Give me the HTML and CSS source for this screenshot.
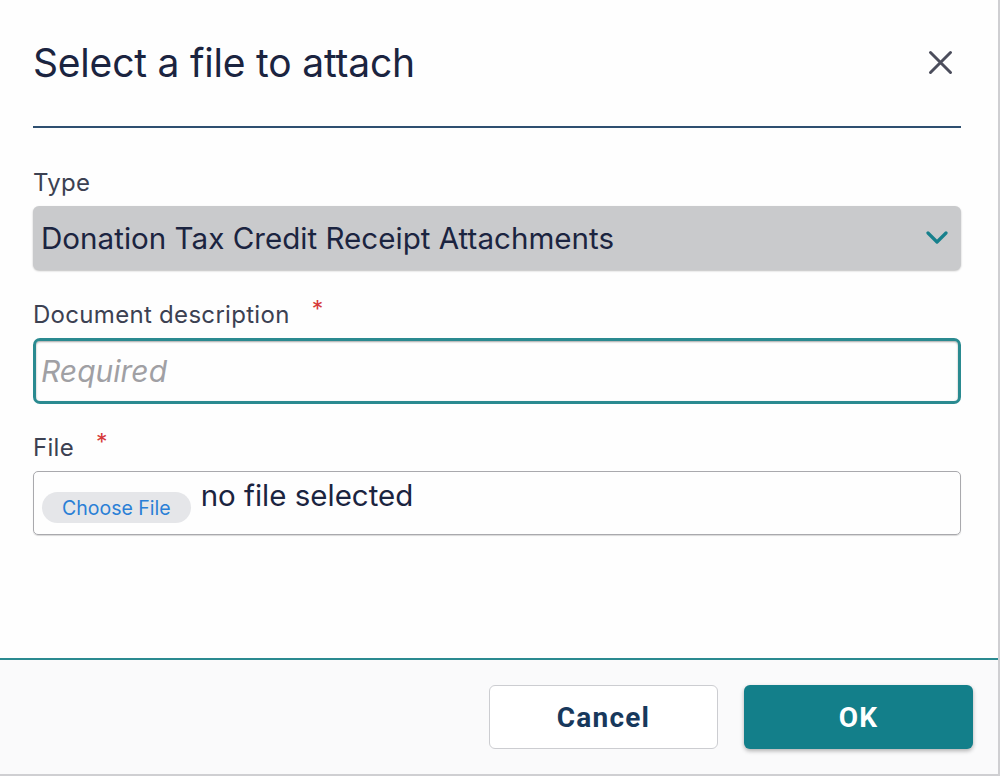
FILE: index.html
```html
<!DOCTYPE html>
<html>
<head>
<meta charset="utf-8">
<link rel="stylesheet" href="styles.css">
</head>
<body>
<div class="dialog">
  <div class="header">
    <h1 class="title">Select a file to attach</h1>
    <button class="close" aria-label="Close">
      <svg width="25" height="25" viewBox="0 0 25 25"><path d="M2.5 2.5L22.5 22.5M22.5 2.5L2.5 22.5" stroke="#4b4d5c" stroke-width="3" stroke-linecap="round"/></svg>
    </button>
  </div>
  <div class="body">
    <div class="field">
      <label class="label">Type</label>
      <div class="select">
        <span>Donation Tax Credit Receipt Attachments</span>
        <svg width="22" height="14" viewBox="0 0 22 14"><path d="M2 2L11 11L20 2" stroke="#17808c" stroke-width="3.2" fill="none" stroke-linecap="round" stroke-linejoin="round"/></svg>
      </div>
    </div>
    <div class="field">
      <label class="label">Document description<span class="req">*</span></label>
      <div class="input focus"><span class="placeholder">Required</span></div>
    </div>
    <div class="field">
      <label class="label">File<span class="req">*</span></label>
      <div class="filebox">
        <span class="choose">Choose File</span>
        <span class="nofile">no file selected</span>
      </div>
    </div>
  </div>
  <div class="footer">
    <button class="btn cancel">Cancel</button>
    <button class="btn ok">OK</button>
  </div>
</div>
</body>
</html>
```

FILE: styles.css
```css
html, body {
  margin: 0;
  padding: 0;
  background: #ffffff;
}
body {
  font-family: Inter, "Noto Sans", sans-serif;
  color: #1b2440;
}
.dialog {
  width: 998px;
  height: 774px;
  border-right: 2px solid #cfcfd2;
  border-bottom: 2px solid #cfcfd2;
  display: flex;
  flex-direction: column;
  background: #fefefe;
}
.header {
  margin: 0 37px 0 33px;
  height: 126px;
  border-bottom: 2px solid #2e4f70;
  display: flex;
  align-items: center;
  justify-content: space-between;
}
.title {
  margin: 0;
  font-size: 39px;
  font-weight: 400;
  letter-spacing: -0.2px;
  color: #1b2440;
  position: relative;
  top: -1px;
}
.close {
  background: none;
  border: none;
  padding: 0;
  margin-right: 8px;
  width: 25px;
  height: 25px;
  display: flex;
  position: relative;
  top: -1px;
}
.body {
  flex: 1;
  padding: 40px 37px 0 33px;
  display: flex;
  flex-direction: column;
}
.field {
  display: flex;
  flex-direction: column;
}
.label {
  font-size: 24px;
  letter-spacing: 0.3px;
  color: #3c4152;
  height: 38px;
  line-height: 30px;
}
.req {
  color: #d63a3a;
  font-size: 23px;
  margin-left: 22px;
  position: relative;
  top: -6px;
}
.select {
  height: 64px;
  background: #c9cacc;
  border-radius: 6px;
  box-shadow: 0 1px 2px rgba(0,0,0,0.25);
  display: flex;
  align-items: center;
  justify-content: space-between;
  padding: 0 13px 0 8px;
  font-size: 29.6px;
  color: #1b2440;
  margin-bottom: 30px;
}
.input {
  height: 60px;
  border: 3px solid #2a8a90;
  border-radius: 7px;
  box-shadow: inset 0 1px 2px rgba(0,0,0,0.35);
  display: flex;
  align-items: center;
  padding: 0 5px;
  margin-bottom: 29px;
}
.placeholder {
  font-size: 30px;
  font-style: italic;
  color: #a0a0a4;
}
.filebox {
  height: 62px;
  border: 1px solid #a9a9ad;
  border-radius: 5px;
  box-shadow: 0 1px 1px rgba(0,0,0,0.15);
  display: flex;
  align-items: flex-start;
  padding: 0 8px;
  gap: 10px;
}
.choose {
  margin-top: 20px;
  height: 31px;
  line-height: 32px;
  padding: 0 20px;
  background: #e5e6e9;
  border-radius: 16px;
  font-size: 19.5px;
  color: #2a7fd6;
}
.nofile {
  margin-top: 5px;
  font-size: 29.5px;
  line-height: 36px;
  color: #1b2440;
}
.footer {
  height: 114px;
  border-top: 2px solid #2a8a90;
  background: #fafafb;
  display: flex;
  align-items: center;
  justify-content: flex-end;
  gap: 26px;
  padding: 0 25px 0 0;
}
.btn {
  font-family: Roboto, "Liberation Sans", sans-serif;
  font-weight: 700;
  font-size: 28px;
  letter-spacing: 1.2px;
  width: 229px;
  height: 64px;
  border-radius: 6px;
  cursor: pointer;
}
.cancel {
  background: #ffffff;
  border: 1px solid #cccdd1;
  color: #17385c;
}
.ok {
  background: #137f8a;
  border: none;
  color: #ffffff;
  box-shadow: 0 2px 4px rgba(0,0,0,0.3);
}
```
